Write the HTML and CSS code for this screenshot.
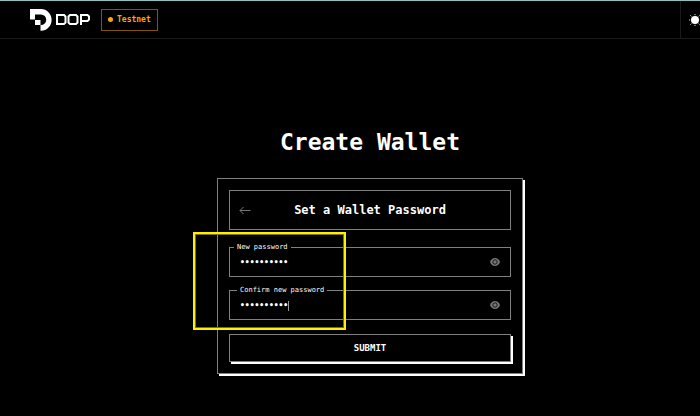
FILE: index.html
```html
<!DOCTYPE html>
<html lang="en">
  <head>
    <meta charset="UTF-8" />
    <meta name="viewport" content="width=device-width, initial-scale=1.0" />
    <title>Create Wallet | DOP</title>
    <link rel="stylesheet" href="styles.css" />
  </head>
  <body>
    <header class="navbar">
      <a class="logo" href="#" aria-label="DOP">
        <svg class="logo-mark" viewBox="0 0 22 22" fill="#fff">
          <path d="M0 0H11A10.500 10.800 0 0 1 11 21.800H10.500V16H11A5.200 5.200 0 0 0 11 5.500H5V10.500H0Z" />
          <path d="M5 11H10.500V16H5Z" />
        </svg>
        <svg class="logo-word" viewBox="0 0 34 11" fill="none" stroke="#fff" stroke-width="2">
          <path d="M1 1H8L9.500 2.500V8.500L8 10H1Z" />
          <path d="M14 1H20L21.500 2.500V8.500L20 10H14L12.500 8.500V2.500Z" />
          <path d="M25 11V1H31.500L33 2.500V5.500L31.500 7H25" />
        </svg>
      </a>
      <button class="network" type="button"><span class="dot"></span>Testnet</button>
      <button class="theme-toggle" type="button" aria-label="Toggle theme">
        <svg viewBox="0 0 14 14">
          <circle cx="7" cy="7" r="4" fill="#fff" />
          <g stroke="#ddd" stroke-width="1">
            <path d="M7 1V2.200M7 11.800V13M1 7H2.200M11.800 7H13M2.400 2.400L3.400 3.400M10.600 10.600L11.600 11.600M2.400 11.600L3.400 10.600M10.600 3.400L11.600 2.400" />
          </g>
        </svg>
      </button>
    </header>

    <main class="page">
      <h1>Create Wallet</h1>
      <form class="card">
        <div class="card-header">
          <button class="back" type="button" aria-label="Back">
            <svg viewBox="0 0 12 8" fill="none" stroke="#777" stroke-width="1">
              <path d="M11.500 4.500H1M4.500 1L1 4.500L4.500 8" />
            </svg>
          </button>
          <h2>Set a Wallet Password</h2>
        </div>

        <div class="field">
          <label for="new-password">New password</label>
          <input type="password" id="new-password" value="abcdefghij" />
          <button class="eye" type="button" aria-label="Show password">
            <svg viewBox="0 0 10 8">
              <path d="M0 4C1 1.300 2.800 0 5 0S9 1.300 10 4C9 6.700 7.200 8 5 8S1 6.700 0 4Z" fill="#777" />
              <circle cx="5" cy="4" r="2.200" fill="#777" stroke="#000" stroke-width=".8" />
            </svg>
          </button>
        </div>

        <div class="field focused">
          <label for="confirm-password">Confirm new password</label>
          <input type="password" id="confirm-password" value="abcdefghij" />
          <span class="caret"></span>
          <button class="eye" type="button" aria-label="Show password">
            <svg viewBox="0 0 10 8">
              <path d="M0 4C1 1.300 2.800 0 5 0S9 1.300 10 4C9 6.700 7.200 8 5 8S1 6.700 0 4Z" fill="#777" />
              <circle cx="5" cy="4" r="2.200" fill="#777" stroke="#000" stroke-width=".8" />
            </svg>
          </button>
        </div>

        <button class="submit" type="submit">SUBMIT</button>
        <div class="highlight"></div>
      </form>
    </main>
  </body>
</html>
```

FILE: styles.css
```css
* {
  margin: 0;
  padding: 0;
  box-sizing: border-box;
}

body {
  font-family: "DejaVu Sans Mono", "Liberation Mono", monospace;
  background-color: #000;
  color: #fff;
  border-top: 1px solid #8fc1c1;
  overflow-x: hidden;
}

button,
input {
  font-family: inherit;
  background: none;
  border: none;
  color: inherit;
}

button {
  cursor: pointer;
}

svg {
  display: block;
}

.navbar {
  display: flex;
  align-items: center;
  height: 38px;
  padding-left: 30px;
  border-bottom: 1px solid #1a1a1a;
}

.logo {
  display: flex;
  align-items: center;
  gap: 4px;
}

.logo-mark {
  width: 22px;
  height: 22px;
}

.logo-word {
  width: 34px;
  height: 11px;
}

.network {
  display: flex;
  align-items: center;
  gap: 4px;
  height: 22px;
  margin-left: 11px;
  padding: 0 6px;
  border: 1px solid #855800;
  color: #ffa500;
  font-size: 8px;
  font-weight: bold;
}

.dot {
  width: 5px;
  height: 5px;
  border-radius: 50%;
  background: #ffa500;
}

.theme-toggle {
  align-self: stretch;
  margin-left: auto;
  width: 20px;
  padding-left: 7px;
  border-left: 1px solid #1a1a1a;
  overflow: hidden;
}

.theme-toggle svg {
  width: 14px;
  height: 14px;
}

.page {
  display: flex;
  flex-direction: column;
  align-items: center;
  padding: 88px 0 40px 40px;
}

h1 {
  font-size: 23px;
  line-height: 30px;
}

.card {
  position: relative;
  width: 306px;
  margin-top: 21px;
  padding: 11px;
  border: 1px solid #808080;
  box-shadow: 2px 2px #fff;
}

.card-header {
  display: flex;
  align-items: center;
  height: 40px;
  padding: 0 9px;
  border: 1px solid #808080;
}

.card-header h2 {
  flex: 1;
  padding-right: 12px;
  font-size: 12px;
  text-align: center;
}

.back svg {
  width: 12px;
  height: 8px;
  overflow: visible;
}

.field {
  position: relative;
  display: flex;
  align-items: center;
  height: 30px;
  margin-top: 17px;
  padding: 0 10px;
  border: 1px solid #808080;
}

.field + .field {
  margin-top: 13px;
}

.field label {
  position: absolute;
  top: -6px;
  left: 4px;
  padding: 0 3px;
  background: #000;
  font-size: 7px;
  line-height: 10px;
}

.field.focused label {
  left: 7px;
}

.field input {
  flex: 1;
  min-width: 0;
  height: 20px;
  font-size: 8px;
  font-weight: bold;
  outline: none;
}

.caret {
  position: absolute;
  top: 10px;
  left: 58px;
  width: 1px;
  height: 10px;
  background: #999;
}

.eye svg {
  width: 10px;
  height: 8px;
}

.submit {
  display: block;
  width: 100%;
  height: 28px;
  margin-top: 14px;
  border: 1px solid #808080;
  box-shadow: 2px 2px #fff;
  font-size: 9px;
  font-weight: bold;
}

/* marks the password fields */
.highlight {
  position: absolute;
  top: 53px;
  left: -25px;
  width: 153px;
  height: 98px;
  border: 2px solid #fff000;
  box-shadow: inset 0 0 0 1px #7a7300;
  pointer-events: none;
}
```
